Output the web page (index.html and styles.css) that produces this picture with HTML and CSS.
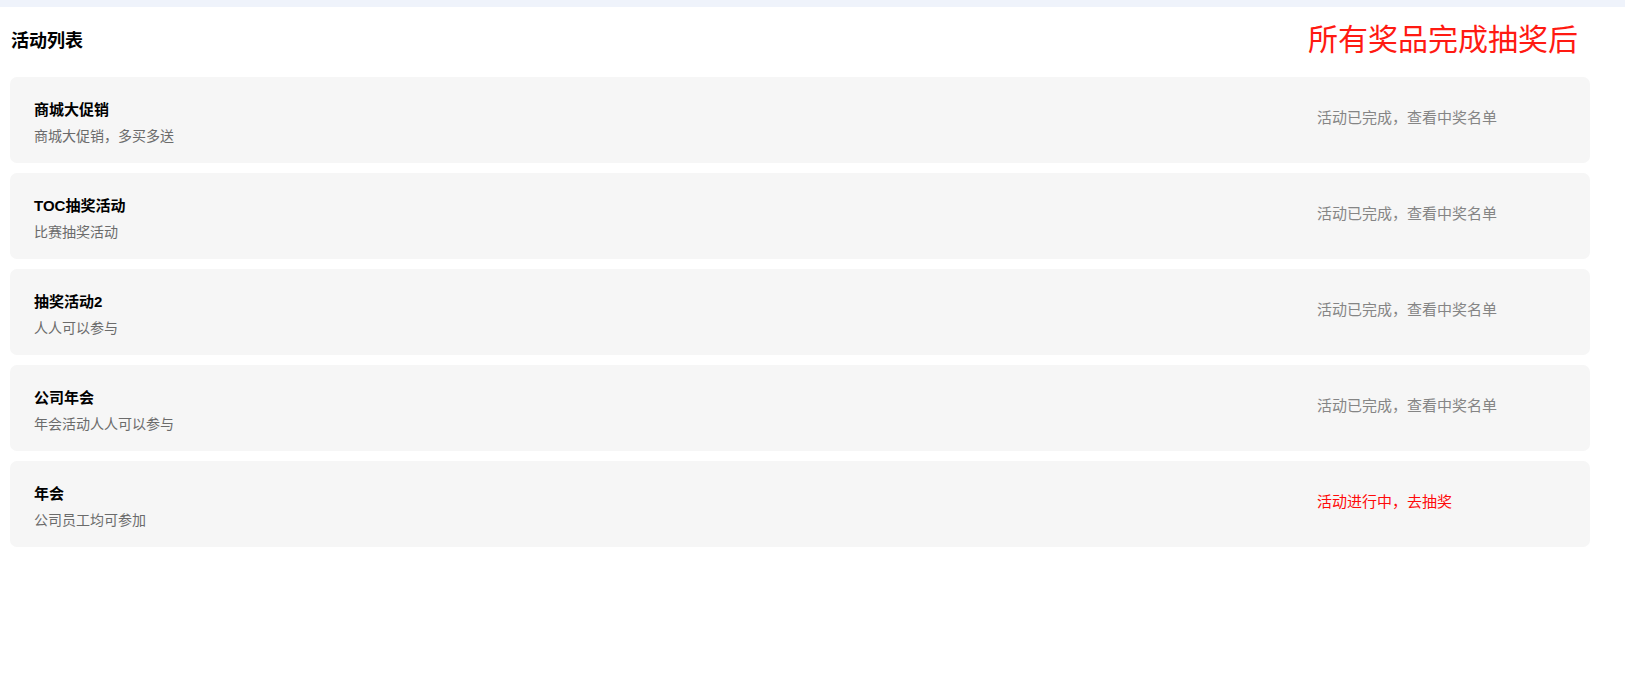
FILE: index.html
```html
<!DOCTYPE html>
<html lang="zh-CN">
<head>
<meta charset="utf-8">
<title>活动列表</title>
<link rel="stylesheet" href="styles.css">
</head>
<body>
<div class="topbar"></div>
<main class="page">
  <header class="header">
    <h1 class="title">活动列表</h1>
    <div class="note">所有奖品完成抽奖后</div>
  </header>
  <ul class="list">
    <li class="card">
      <div class="info">
        <div class="name">商城大促销</div>
        <div class="desc">商城大促销，多买多送</div>
      </div>
      <div class="action done">活动已完成，查看中奖名单</div>
    </li>
    <li class="card">
      <div class="info">
        <div class="name">TOC抽奖活动</div>
        <div class="desc">比赛抽奖活动</div>
      </div>
      <div class="action done">活动已完成，查看中奖名单</div>
    </li>
    <li class="card">
      <div class="info">
        <div class="name">抽奖活动2</div>
        <div class="desc">人人可以参与</div>
      </div>
      <div class="action done">活动已完成，查看中奖名单</div>
    </li>
    <li class="card">
      <div class="info">
        <div class="name">公司年会</div>
        <div class="desc">年会活动人人可以参与</div>
      </div>
      <div class="action done">活动已完成，查看中奖名单</div>
    </li>
    <li class="card">
      <div class="info">
        <div class="name">年会</div>
        <div class="desc">公司员工均可参加</div>
      </div>
      <div class="action live">活动进行中，去抽奖</div>
    </li>
  </ul>
</main>
</body>
</html>
```

FILE: styles.css
```css
* { box-sizing: border-box; }

html, body {
  margin: 0;
  padding: 0;
  background: #ffffff;
  font-family: "Liberation Sans", "Noto Sans CJK SC", sans-serif;
  color: #000;
}

.topbar {
  height: 7px;
  background: #eff3fb;
}

.page {
  width: 1590px;
  padding-left: 10px;
}

.header {
  display: flex;
  justify-content: space-between;
  align-items: center;
  height: 70px;
}

.title {
  margin: 0;
  margin-top: -2px;
  padding-left: 1px;
  font-size: 18px;
  font-weight: bold;
  line-height: 26px;
}

.note {
  margin-right: 12px;
  font-size: 30px;
  line-height: 40px;
  color: #ff1a12;
  margin-top: -4px;
}

.list {
  list-style: none;
  margin: 0;
  padding: 0;
  display: flex;
  flex-direction: column;
  gap: 10px;
}

.card {
  display: flex;
  align-items: center;
  height: 86px;
  background: #f6f6f6;
  border-radius: 7px;
  padding: 0 0 0 24px;
}

.info {
  flex: 1;
  display: flex;
  flex-direction: column;
  gap: 5px;
  padding-top: 4px;
}

.name {
  font-size: 15px;
  font-weight: bold;
  line-height: 22px;
}

.desc {
  font-size: 14px;
  line-height: 20px;
  color: #6b6b6b;
}

.action {
  width: 273px;
  flex-shrink: 0;
  font-size: 15px;
  line-height: 22px;
  margin-top: -5px;
}

.action.done { color: #858585; }
.action.live { color: #ff0a0a; }
```
